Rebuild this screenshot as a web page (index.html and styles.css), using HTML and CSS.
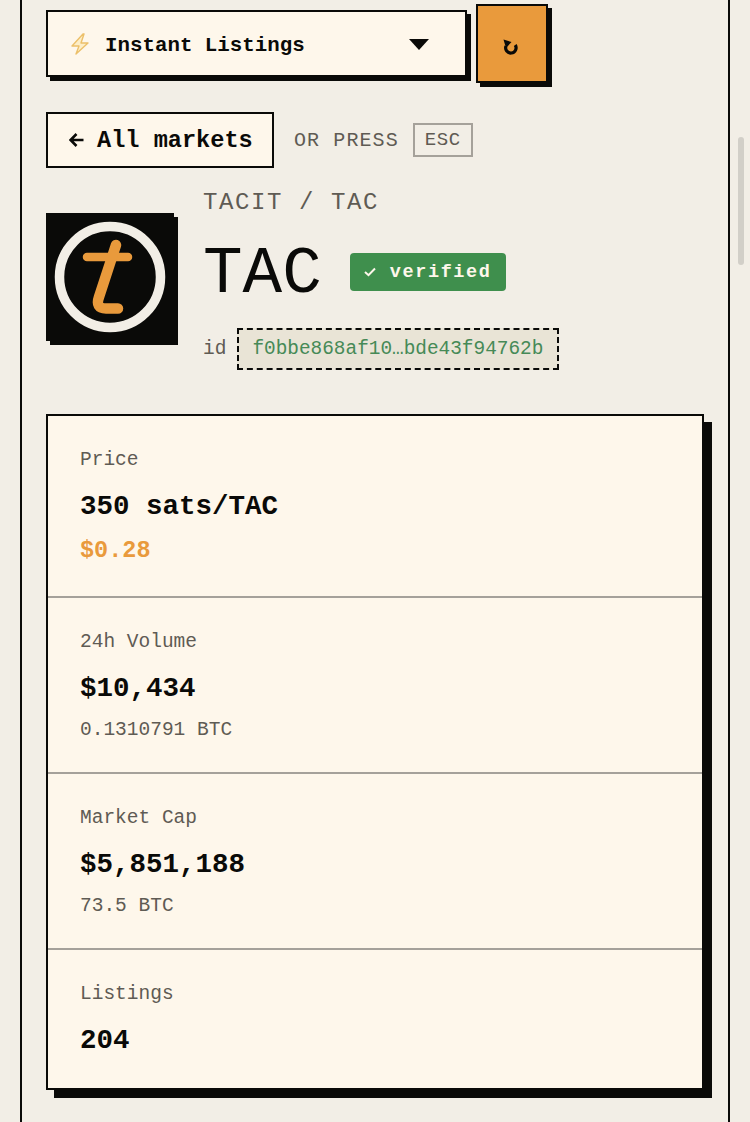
FILE: index.html
```html
<!DOCTYPE html>
<html lang="en">
<head>
  <meta charset="UTF-8">
  <title>TAC market</title>
  <meta name="viewport" content="width=device-width, initial-scale=1.0">
  <link rel="stylesheet" href="styles.css">
</head>
<body>
  <main class="frame">
    <div class="toolbar">
      <div class="select">
        <svg class="bolt" width="20" height="22" viewBox="0 0 20 22">
          <path d="M13 1 L2 13 H9 L6 21 L18 10 H11 L14 1 Z" fill="#fdeec8" stroke="#ecc06a" stroke-width="1.4" stroke-linejoin="round"/>
        </svg>
        <span class="select-label">Instant Listings</span>
        <span class="caret"></span>
      </div>
      <button class="refresh">
        <svg width="15" height="16" viewBox="0 0 15 16">
          <path d="M12.2 6 A5.2 5.2 0 1 1 3 7" fill="none" stroke="#0a0a08" stroke-width="3.2"/>
          <path d="M0.5 0.5 L8.5 3 L3 9 Z" fill="#0a0a08"/>
        </svg>
      </button>
    </div>

    <div class="back-row">
      <a class="back">
        <svg class="back-arrow" width="15" height="14" viewBox="0 0 15 14">
          <path d="M14.5 7 H2 M7.5 1 L1.5 7 L7.5 13" fill="none" stroke="#0a0a08" stroke-width="2.6"/>
        </svg>
        All markets
      </a>
      <span class="or-press">OR PRESS</span>
      <kbd class="key">ESC</kbd>
    </div>

    <header class="token">
      <svg class="logo" width="128" height="128" viewBox="0 0 128 128">
        <rect width="128" height="128" fill="#0a0a08"/>
        <circle cx="64" cy="64" r="50.5" fill="none" stroke="#f2eee6" stroke-width="9.5"/>
        <path d="M41 44 H82" fill="none" stroke="#e99a3c" stroke-width="8.5" stroke-linecap="round"/>
        <path d="M70 32 L53 84 Q49 95.5 60 95.5 H72" fill="none" stroke="#e99a3c" stroke-width="10.5" stroke-linecap="round" stroke-linejoin="round"/>
      </svg>
      <div class="token-info">
        <div class="token-name">TACIT / TAC</div>
        <div class="token-title">
          <h1>TAC</h1>
          <span class="badge">
            <svg class="check" width="12" height="10" viewBox="0 0 12 10">
              <path d="M1 5 L4.5 8.2 L11 1.5" fill="none" stroke="#fef7eb" stroke-width="2"/>
            </svg>
            verified
          </span>
        </div>
        <div class="token-id">
          <span>id</span>
          <code class="id-box">f0bbe868af10…bde43f94762b</code>
        </div>
      </div>
    </header>

    <section class="stats">
      <div class="stat stat-price">
        <div class="stat-label">Price</div>
        <div class="stat-value">350 sats/TAC</div>
        <div class="stat-usd">$0.28</div>
      </div>
      <div class="stat">
        <div class="stat-label">24h Volume</div>
        <div class="stat-value">$10,434</div>
        <div class="stat-sub">0.1310791 BTC</div>
      </div>
      <div class="stat">
        <div class="stat-label">Market Cap</div>
        <div class="stat-value">$5,851,188</div>
        <div class="stat-sub">73.5 BTC</div>
      </div>
      <div class="stat stat-last">
        <div class="stat-label">Listings</div>
        <div class="stat-value">204</div>
      </div>
    </section>
  </main>
  <div class="scroll-thumb"></div>
</body>
</html>
```

FILE: styles.css
```css
html, body {
  height: 1122px;
  overflow: hidden;
}
body {
  margin: 0;
  background: #f2eee6;
  color: #0a0a08;
  font-family: "Liberation Mono", monospace;
}
.frame {
  box-sizing: border-box;
  width: 710px;
  height: 1122px;
  margin-left: 20px;
  padding: 4px 24px 0;
  border-left: 2px solid #0a0a08;
  border-right: 2px solid #0a0a08;
}
.toolbar {
  display: flex;
  align-items: center;
  gap: 9px;
}
.select {
  box-sizing: border-box;
  display: flex;
  align-items: center;
  width: 421px;
  height: 67px;
  padding: 0 36px 0 22px;
  background: #fef7eb;
  border: 2px solid #0a0a08;
  box-shadow: 4px 4px 0 #0a0a08;
}
.bolt {
  margin-right: 15px;
}
.select-label {
  display: block;
  height: 22px;
  margin-top: 2px;
  line-height: 24px;
  overflow: hidden;
  font-size: 20.8px;
  font-weight: bold;
}
.caret {
  margin-left: auto;
  margin-top: 2px;
  border-left: 10px solid transparent;
  border-right: 10px solid transparent;
  border-top: 11px solid #0a0a08;
}
.refresh {
  box-sizing: border-box;
  display: flex;
  align-items: center;
  justify-content: center;
  width: 72px;
  height: 79px;
  padding: 6px 4px 0 0;
  background: #e99a3c;
  border: 2px solid #0a0a08;
  box-shadow: 4px 4px 0 #0a0a08;
}
.back-row {
  display: flex;
  align-items: center;
  margin-top: 29px;
}
.back {
  box-sizing: border-box;
  display: flex;
  align-items: center;
  gap: 13px;
  width: 228px;
  height: 56px;
  padding-left: 21px;
  background: #fef7eb;
  border: 2px solid #0a0a08;
  font-size: 23.6px;
  font-weight: bold;
}
.or-press {
  margin-left: 20px;
  color: #5f5b54;
  font-size: 20px;
  letter-spacing: 1.1px;
}
.key {
  box-sizing: border-box;
  display: flex;
  align-items: center;
  justify-content: center;
  width: 60px;
  height: 34px;
  margin-left: 14px;
  border: 2px solid #a5a19a;
  color: #5f5b54;
  font-family: "Liberation Mono", monospace;
  font-size: 19px;
  letter-spacing: 0.6px;
}
.token {
  display: flex;
  align-items: center;
  gap: 29px;
  margin-top: 16px;
}
.logo {
  flex: none;
  box-shadow: 4px 4px 0 #0a0a08;
}
.token-name {
  color: #5f5b54;
  font-size: 24px;
  line-height: 38px;
  letter-spacing: 1.6px;
}
.token-title {
  display: flex;
  align-items: center;
  gap: 28px;
  margin-top: 12px;
}
h1 {
  margin: 0;
  padding-top: 6px;
  font-size: 66px;
  font-weight: normal;
  line-height: 70px;
}
.badge {
  box-sizing: border-box;
  display: flex;
  align-items: center;
  gap: 14px;
  width: 156px;
  height: 38px;
  padding-left: 14px;
  background: #3f8f4d;
  color: #fef7eb;
  border-radius: 4px;
  font-size: 18.5px;
  font-weight: bold;
  letter-spacing: 1.6px;
}
.token-id {
  display: flex;
  align-items: center;
  gap: 11px;
  margin-top: 18px;
  color: #5f5b54;
  font-size: 19.5px;
}
.id-box {
  box-sizing: border-box;
  width: 322px;
  height: 42px;
  line-height: 38px;
  padding-left: 13px;
  background: #e9e4d6;
  border: 2px dashed #0a0a08;
  color: #468a57;
  font-family: "Liberation Mono", monospace;
  font-size: 19.4px;
}
.stats {
  box-sizing: border-box;
  width: 658px;
  height: 676px;
  margin-top: 44px;
  background: #fef7eb;
  border: 2px solid #0a0a08;
  box-shadow: 8px 8px 0 #0a0a08;
}
.stat {
  box-sizing: border-box;
  height: 176px;
  padding: 31px 32px 0;
  border-bottom: 2px solid #a5a19a;
}
.stat-price {
  height: 182px;
}
.stat-last {
  border-bottom: none;
}
.stat-label {
  color: #5f5b54;
  font-size: 19.5px;
  line-height: 26px;
}
.stat-value {
  margin-top: 16px;
  font-size: 27.5px;
  font-weight: bold;
  line-height: 36px;
}
.stat-usd {
  margin-top: 11px;
  color: #e99a3c;
  font-size: 23.5px;
  font-weight: bold;
  line-height: 30px;
}
.stat-sub {
  margin-top: 8px;
  color: #5f5b54;
  font-size: 19.5px;
  line-height: 30px;
}
.scroll-thumb {
  position: absolute;
  top: 137px;
  left: 738px;
  width: 6px;
  height: 128px;
  background: #d2cfc8;
  border-radius: 3px;
}
```
